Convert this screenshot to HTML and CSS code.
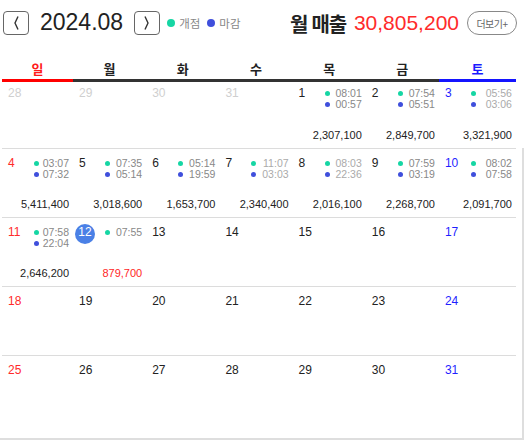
FILE: index.html
```html
<!DOCTYPE html>
<html lang="ko">
<head>
<meta charset="utf-8">
<title>2024.08 매출 달력</title>
<link rel="stylesheet" href="styles.css">
</head>
<body>
<div class="app">
  <header class="top">
    <button class="nav" aria-label="이전 달"><svg width="24" height="22" viewBox="0 0 24 22"><polyline points="14,4.5 11,11 14,17.5" fill="none" stroke="#333" stroke-width="1.4"/></svg></button>
    <h1 class="title">2024.08</h1>
    <button class="nav" aria-label="다음 달"><svg width="24" height="22" viewBox="0 0 24 22"><polyline points="10,4.5 13,11 10,17.5" fill="none" stroke="#333" stroke-width="1.4"/></svg></button>
    <ul class="legend">
      <li><span class="ldot open"></span>개점</li>
      <li><span class="ldot close"></span>마감</li>
    </ul>
    <div class="sales">
      <span class="sales-label">월 매출</span>
      <span class="sales-value">30,805,200</span>
      <button class="more">더보기+</button>
    </div>
  </header>

  <div class="weekdays">
    <div class="wd sun">일</div>
    <div class="wd">월</div>
    <div class="wd">화</div>
    <div class="wd">수</div>
    <div class="wd">목</div>
    <div class="wd">금</div>
    <div class="wd sat">토</div>
  </div>

  <div class="body">
    <div class="week first">
      <div class="day other"><div class="day-top"><span class="num">28</span></div></div>
      <div class="day other"><div class="day-top"><span class="num">29</span></div></div>
      <div class="day other"><div class="day-top"><span class="num">30</span></div></div>
      <div class="day other"><div class="day-top"><span class="num">31</span></div></div>
      <div class="day">
        <div class="day-top"><span class="num">1</span>
          <div class="times">
            <div class="time"><span class="dot open"></span><span>08:01</span></div>
            <div class="time"><span class="dot close"></span><span>00:57</span></div>
          </div>
        </div>
        <div class="amount">2,307,100</div>
      </div>
      <div class="day">
        <div class="day-top"><span class="num">2</span>
          <div class="times">
            <div class="time"><span class="dot open"></span><span>07:54</span></div>
            <div class="time"><span class="dot close"></span><span>05:51</span></div>
          </div>
        </div>
        <div class="amount">2,849,700</div>
      </div>
      <div class="day sat">
        <div class="day-top"><span class="num">3</span>
          <div class="times faint">
            <div class="time"><span class="dot open"></span><span>05:56</span></div>
            <div class="time"><span class="dot close"></span><span>03:06</span></div>
          </div>
        </div>
        <div class="amount">3,321,900</div>
      </div>
    </div>

    <div class="rest">
      <div class="week">
        <div class="day sun">
          <div class="day-top"><span class="num">4</span>
            <div class="times">
              <div class="time"><span class="dot open"></span><span>03:07</span></div>
              <div class="time"><span class="dot close"></span><span>07:32</span></div>
            </div>
          </div>
          <div class="amount">5,411,400</div>
        </div>
        <div class="day">
          <div class="day-top"><span class="num">5</span>
            <div class="times">
              <div class="time"><span class="dot open"></span><span>07:35</span></div>
              <div class="time"><span class="dot close"></span><span>05:14</span></div>
            </div>
          </div>
          <div class="amount">3,018,600</div>
        </div>
        <div class="day">
          <div class="day-top"><span class="num">6</span>
            <div class="times">
              <div class="time"><span class="dot open"></span><span>05:14</span></div>
              <div class="time"><span class="dot close"></span><span>19:59</span></div>
            </div>
          </div>
          <div class="amount">1,653,700</div>
        </div>
        <div class="day">
          <div class="day-top"><span class="num">7</span>
            <div class="times faint">
              <div class="time"><span class="dot open"></span><span>11:07</span></div>
              <div class="time"><span class="dot close"></span><span>03:03</span></div>
            </div>
          </div>
          <div class="amount">2,340,400</div>
        </div>
        <div class="day">
          <div class="day-top"><span class="num">8</span>
            <div class="times faint">
              <div class="time"><span class="dot open"></span><span>08:03</span></div>
              <div class="time"><span class="dot close"></span><span>22:36</span></div>
            </div>
          </div>
          <div class="amount">2,016,100</div>
        </div>
        <div class="day">
          <div class="day-top"><span class="num">9</span>
            <div class="times">
              <div class="time"><span class="dot open"></span><span>07:59</span></div>
              <div class="time"><span class="dot close"></span><span>03:19</span></div>
            </div>
          </div>
          <div class="amount">2,268,700</div>
        </div>
        <div class="day sat">
          <div class="day-top"><span class="num">10</span>
            <div class="times">
              <div class="time"><span class="dot open"></span><span>08:02</span></div>
              <div class="time"><span class="dot close"></span><span>07:58</span></div>
            </div>
          </div>
          <div class="amount">2,091,700</div>
        </div>
      </div>

      <div class="week">
        <div class="day sun">
          <div class="day-top"><span class="num">11</span>
            <div class="times">
              <div class="time"><span class="dot open"></span><span>07:58</span></div>
              <div class="time"><span class="dot close"></span><span>22:04</span></div>
            </div>
          </div>
          <div class="amount">2,646,200</div>
        </div>
        <div class="day">
          <div class="day-top"><span class="num today">12</span>
            <div class="times">
              <div class="time"><span class="dot open"></span><span>07:55</span></div>
            </div>
          </div>
          <div class="amount red">879,700</div>
        </div>
        <div class="day"><div class="day-top"><span class="num">13</span></div></div>
        <div class="day"><div class="day-top"><span class="num">14</span></div></div>
        <div class="day"><div class="day-top"><span class="num">15</span></div></div>
        <div class="day"><div class="day-top"><span class="num">16</span></div></div>
        <div class="day sat"><div class="day-top"><span class="num">17</span></div></div>
      </div>

      <div class="week">
        <div class="day sun"><div class="day-top"><span class="num">18</span></div></div>
        <div class="day"><div class="day-top"><span class="num">19</span></div></div>
        <div class="day"><div class="day-top"><span class="num">20</span></div></div>
        <div class="day"><div class="day-top"><span class="num">21</span></div></div>
        <div class="day"><div class="day-top"><span class="num">22</span></div></div>
        <div class="day"><div class="day-top"><span class="num">23</span></div></div>
        <div class="day sat"><div class="day-top"><span class="num">24</span></div></div>
      </div>

      <div class="week">
        <div class="day sun"><div class="day-top"><span class="num">25</span></div></div>
        <div class="day"><div class="day-top"><span class="num">26</span></div></div>
        <div class="day"><div class="day-top"><span class="num">27</span></div></div>
        <div class="day"><div class="day-top"><span class="num">28</span></div></div>
        <div class="day"><div class="day-top"><span class="num">29</span></div></div>
        <div class="day"><div class="day-top"><span class="num">30</span></div></div>
        <div class="day sat"><div class="day-top"><span class="num">31</span></div></div>
      </div>
    </div>
  </div>
</div>
</body>
</html>
```

FILE: styles.css
```css
* { box-sizing: border-box; }

html, body {
  margin: 0;
  padding: 0;
  background: #fff;
}

body {
  font-family: "Liberation Sans", "Noto Sans CJK KR", sans-serif;
  color: #222;
}

.app {
  width: 528px;
  height: 440px;
  overflow: hidden;
}

/* ---------- top bar ---------- */
.top {
  display: flex;
  align-items: center;
  height: 35px;
  padding: 11px 11px 0 3px;
}

.nav {
  width: 26px;
  height: 24px;
  padding: 0;
  margin: 0;
  border: 1px solid #666;
  border-radius: 4px;
  background: #fff;
  display: flex;
  align-items: center;
  justify-content: center;
}

.nav svg { display: block; }

.title {
  margin: -2px 11px 0 11px;
  font-size: 23px;
  font-weight: normal;
  line-height: 26px;
  color: #222;
}

.legend {
  display: flex;
  align-items: center;
  gap: 7px;
  margin: 0 0 0 7px;
  padding: 0;
  list-style: none;
  font-size: 11.5px;
  color: #888;
}

.legend li {
  display: flex;
  align-items: center;
  gap: 4px;
}

.ldot {
  width: 8px;
  height: 8px;
  border-radius: 50%;
}

.open { background: #16d6a4; }
.close { background: #3f4fdc; }

.sales {
  margin-left: auto;
  display: flex;
  align-items: center;
}

.sales-label {
  font-family: "Noto Sans CJK KR", sans-serif;
  font-weight: bold;
  font-size: 20px;
  letter-spacing: -1.2px;
  color: #222;
  margin-right: 8px;
}

.sales-value {
  font-size: 21px;
  color: #ff2b2b;
  margin-right: 8px;
}

.more {
  width: 50px;
  height: 24px;
  padding: 0;
  border: 1px solid #888;
  border-radius: 12px;
  background: #fff;
  font-family: "Noto Sans CJK KR", sans-serif;
  font-size: 10px;
  letter-spacing: -0.5px;
  color: #666;
}

/* ---------- weekdays ---------- */
.weekdays,
.week {
  display: grid;
  grid-template-columns: 71px repeat(5, 73.2px) 77px;
}

.weekdays {
  margin: 24px 0 0 2px;
  width: 514px;
}

.wd {
  height: 23px;
  line-height: 20px;
  text-align: center;
  font-family: "Noto Sans CJK KR", sans-serif;
  font-size: 13px;
  font-weight: bold;
  color: #222;
  border-bottom: 3px solid #333;
}

.wd.sun { color: #ff1a1a; border-bottom-color: #ff0000; }
.wd.sat { color: #1a1aff; border-bottom-color: #1414ff; }

/* ---------- calendar body ---------- */
.week.first {
  width: 514px;
  height: 66px;
  margin-left: 2px;
}

.rest {
  width: 524px;
  padding: 0 6px 14px 2px;
  border-right: 2px solid #dedede;
  border-bottom: 2px solid #dedede;
}

.rest .week {
  height: 69px;
  border-top: 1px solid #dcdcdc;
}

.day {
  display: flex;
  flex-direction: column;
  padding: 7px 4px 6px 6px;
}

.week.first .day { padding-top: 4px; }

.day-top {
  display: flex;
  align-items: flex-start;
}

.num {
  flex: none;
  width: 26px;
  font-size: 12px;
  line-height: 14px;
  color: #222;
}

.day.sun .num { color: #ff2a2a; }
.day.sat .num { color: #1f1fff; }
.day.other .num { color: #cfcfcf; }

.num.today {
  width: 20px;
  height: 20px;
  margin: -1px 10px 0 -4px;
  border-radius: 50%;
  background: #4a80e6;
  color: #fff;
  text-align: center;
  line-height: 16px;
}

.times {
  flex: 1;
  margin-top: 1.5px;
}

.time {
  display: flex;
  justify-content: space-between;
  align-items: center;
  font-size: 10.5px;
  line-height: 11px;
  color: #888;
}

.times.faint .time { color: #aaa; }

.dot {
  width: 5px;
  height: 5px;
  border-radius: 50%;
}

.amount {
  margin-top: auto;
  text-align: right;
  font-size: 11px;
  line-height: 13px;
  color: #222;
}

.amount.red { color: #ff1f1f; }
```
